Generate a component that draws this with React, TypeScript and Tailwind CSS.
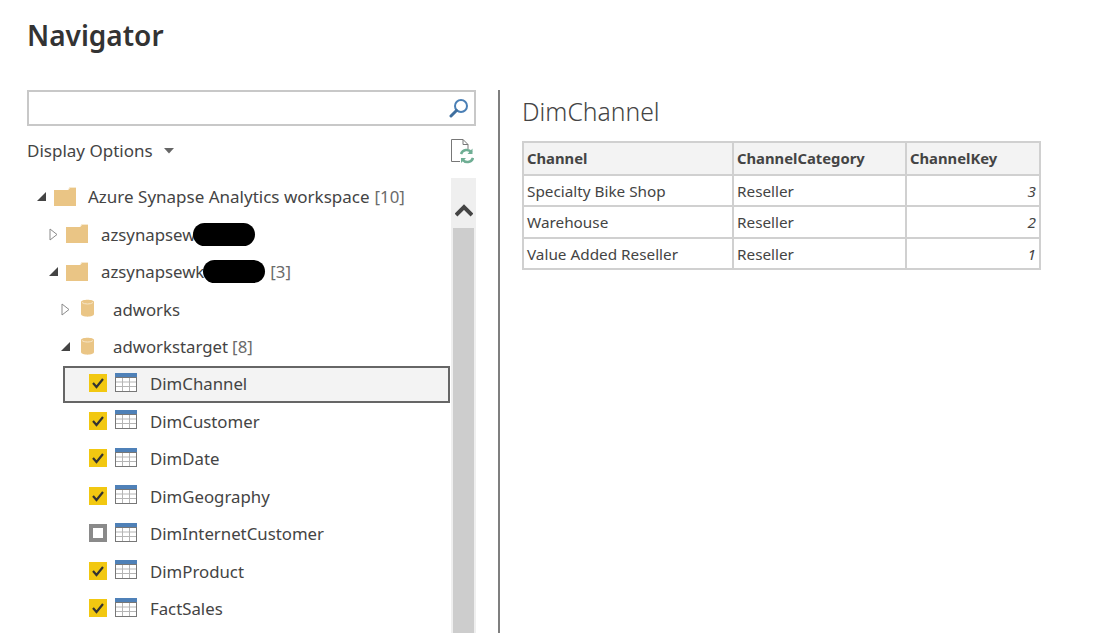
import React from 'react'

const font = { fontFamily: '"Noto Sans", "Open Sans", sans-serif' }

const Caret = ({ open }: { open: boolean }) =>
  open ? (
    <svg width="11" height="11" viewBox="0 0 11 11" className="shrink-0">
      <path d="M1 10 L10 10 L10 1 Z" fill="#444444" />
    </svg>
  ) : (
    <svg width="9" height="13" viewBox="0 0 9 13" className="shrink-0">
      <path d="M1 1 L8 6.5 L1 12 Z" fill="#ffffff" stroke="#8a8a8a" strokeWidth="1" />
    </svg>
  )

const Folder = () => (
  <svg width="22" height="19" viewBox="0 0 22 19" className="mb-[1px] block shrink-0">
    <path d="M0 3 H14 L16 0 H22 V19 H0 Z" fill="#eac585" />
    <path d="M14 3 L16 0.5 H22" fill="none" stroke="#f7e9cf" strokeWidth="1" />
  </svg>
)

const Cylinder = () => (
  <svg width="13" height="18" viewBox="0 0 13 18" className="mb-[2px] block shrink-0">
    <path d="M0 3 C0 0 13 0 13 3 V15 C13 18.500 0 18.500 0 15 Z" fill="#eac585" />
    <path d="M1 3.500 C3 5.500 10 5.500 12 3.500" fill="none" stroke="#f7e6c8" strokeWidth="1" />
  </svg>
)

const TableIcon = () => (
  <svg width="22" height="19" viewBox="0 0 22 19" className="mb-[4px] block shrink-0">
    <rect x="0" y="0" width="22" height="5" fill="#4f81b8" />
    <rect x="0.500" y="4.500" width="21" height="14" fill="#ffffff" stroke="#777777" />
    <path d="M7.500 5 V18 M14.500 5 V18 M1 9 H21 M1 13.500 H21" stroke="#b5b5b5" strokeWidth="1" fill="none" />
  </svg>
)

const Check = ({ on }: { on: boolean }) =>
  on ? (
    <svg width="18" height="18" viewBox="0 0 18 18" className="mb-[2px] block shrink-0">
      <rect width="18" height="18" fill="#f2c811" />
      <path d="M4 9 L7.500 13 L14 5" fill="none" stroke="#333333" strokeWidth="2.200" />
    </svg>
  ) : (
    <svg width="18" height="18" viewBox="0 0 18 18" className="mb-[2px] block shrink-0">
      <rect x="2" y="2" width="14" height="14" fill="#ffffff" stroke="#8a8a8a" strokeWidth="4" />
    </svg>
  )

const tables = [
  { name: 'DimChannel', on: true, selected: true },
  { name: 'DimCustomer', on: true },
  { name: 'DimDate', on: true },
  { name: 'DimGeography', on: true },
  { name: 'DimInternetCustomer', on: false },
  { name: 'DimProduct', on: true },
  { name: 'FactSales', on: true },
]

const preview = [
  ['Specialty Bike Shop', 'Reseller', '3'],
  ['Warehouse', 'Reseller', '2'],
  ['Value Added Reseller', 'Reseller', '1'],
]

const Row = ({ className, children }: { className: string; children: React.ReactNode }) => (
  <div className={`flex h-[37.5px] items-center text-[16.8px] text-[#444444] ${className}`}>{children}</div>
)

const Count = ({ n }: { n: number }) => <span className="ml-[5px] text-[#6b6b6b]">[{n}]</span>

export default function App() {
  return (
    <div className="flex h-[633px] w-[1117px] flex-col overflow-hidden bg-white" style={font}>
      <h1 className="h-[90px] pl-[27px] pt-[13px] text-[28px] leading-[44px] font-semibold text-[#333333]">Navigator</h1>

      <div className="flex flex-1 overflow-hidden">
        <div className="ml-[27px] w-[449px] shrink-0">
          <div className="flex h-[36px] items-center justify-end border-2 border-[#c8c8c8] pr-[5px]">
            <svg width="20" height="20" viewBox="0 0 20 20">
              <circle cx="12" cy="8" r="6" fill="none" stroke="#4a7fb5" strokeWidth="2" />
              <path d="M7.500 12.500 L2 18" stroke="#3f6f9f" strokeWidth="3" strokeLinecap="round" />
            </svg>
          </div>

          <div className="flex h-[52px] items-center justify-between pb-[2px]">
            <div className="flex items-center text-[17px] text-[#444444]">
              Display Options
              <svg width="10" height="6" viewBox="0 0 10 6" className="ml-[11px]">
                <path d="M0 0 H10 L5 5.500 Z" fill="#666666" />
              </svg>
            </div>
            <svg width="24" height="26" viewBox="0 0 24 26" className="mr-[2px]">
              <path d="M10 23.500 H1.500 V1.500 H13 L18 6.500 V11 M13 1.500 V6.500 H18" fill="none" stroke="#777777" strokeWidth="1" />
              <path d="M11 16 A6 6 0 0 1 21.500 14.500 M23 20 A6 6 0 0 1 12.500 21.500" fill="none" stroke="#6fae94" strokeWidth="2.500" />
              <path d="M22.500 10.500 V16 H17.500 Z M11 25 V20 H16 Z" fill="#6fae94" />
            </svg>
          </div>

          <div className="flex h-[500px]">
            <div className="min-w-0 flex-1">
              <Row className="pl-[9px]">
                <Caret open />
                <span className="ml-[7px]"><Folder /></span>
                <span className="ml-[12px] text-[17px]">Azure Synapse Analytics workspace</span>
                <Count n={10} />
              </Row>
              <Row className="pl-[22px]">
                <Caret open={false} />
                <span className="ml-[8px]"><Folder /></span>
                <span className="ml-[13px]">azsynapsew</span>
                <span className="-ml-[2px] inline-block h-[23px] w-[62px] rounded-full bg-black" />
              </Row>
              <Row className="pl-[21px]">
                <Caret open />
                <span className="ml-[7px]"><Folder /></span>
                <span className="ml-[13px]">azsynapsewk</span>
                <span className="-ml-[1px] inline-block h-[23px] w-[62px] rounded-full bg-black" />
                <Count n={3} />
              </Row>
              <Row className="pl-[34px]">
                <Caret open={false} />
                <span className="ml-[11px]"><Cylinder /></span>
                <span className="ml-[19px]">adworks</span>
              </Row>
              <Row className="pl-[33px]">
                <Caret open />
                <span className="ml-[10px]"><Cylinder /></span>
                <span className="ml-[19px]">adworkstarget</span>
                <span className="-ml-[1px]"><Count n={8} /></span>
              </Row>
              {tables.map(t => (
                <Row key={t.name} className="ml-[36px] mr-[1px]">
                  <div
                    className={`flex h-[37.5px] flex-1 items-center border-2 pl-[24px] ${
                      t.selected ? 'border-[#666666] bg-[#f3f3f3]' : 'border-transparent'
                    }`}
                  >
                    <Check on={t.on} />
                    <span className="ml-[8px]"><TableIcon /></span>
                    <span className="ml-[13px] mb-[1px]">{t.name}</span>
                  </div>
                </Row>
              ))}
            </div>

            <div className="flex w-[25px] shrink-0 flex-col bg-[#efefef]">
              <div className="flex h-[50px] items-end justify-center pb-[11px]">
                <svg width="18" height="13" viewBox="0 0 18 13">
                  <path d="M1 11 L9 3 L17 11" fill="none" stroke="#444444" strokeWidth="4" />
                </svg>
              </div>
              <div className="mx-[2px] flex-1 bg-[#cdcdcd]" />
            </div>
          </div>
        </div>

        <div className="ml-[22px] w-[2px] shrink-0 bg-[#7f7f7f]" />

        <div className="ml-[22px] w-[518px]">
          <h2 className="h-[51px] pt-[2px] text-[24.7px] leading-[40px] font-light text-[#444444]">DimChannel</h2>
          <table className="w-[517px] table-fixed border-collapse text-[15.3px] text-[#444444]">
            <colgroup>
              <col className="w-[210px]" />
              <col className="w-[173px]" />
              <col className="w-[134px]" />
            </colgroup>
            <thead>
              <tr className="h-[33px] bg-[#f3f3f3] text-[14.8px]">
                <th className="border-2 border-[#d0d0d0] px-[3px] text-left font-bold">Channel</th>
                <th className="border-2 border-[#d0d0d0] px-[3px] text-left font-bold">ChannelCategory</th>
                <th className="border-2 border-[#d0d0d0] px-[3px] text-left font-bold">ChannelKey</th>
              </tr>
            </thead>
            <tbody>
              {preview.map((r, i) => (
                <tr key={r[0]} className={i === 1 ? 'h-[32px]' : 'h-[31px]'}>
                  <td className="border-2 border-[#d0d0d0] px-[3px] pt-[1px]">{r[0]}</td>
                  <td className="border-2 border-[#d0d0d0] px-[3px] pt-[1px]">{r[1]}</td>
                  <td className="border-2 border-[#d0d0d0] px-[3px] pt-[1px] text-right italic">{r[2]}</td>
                </tr>
              ))}
            </tbody>
          </table>
        </div>
      </div>
    </div>
  )
}
